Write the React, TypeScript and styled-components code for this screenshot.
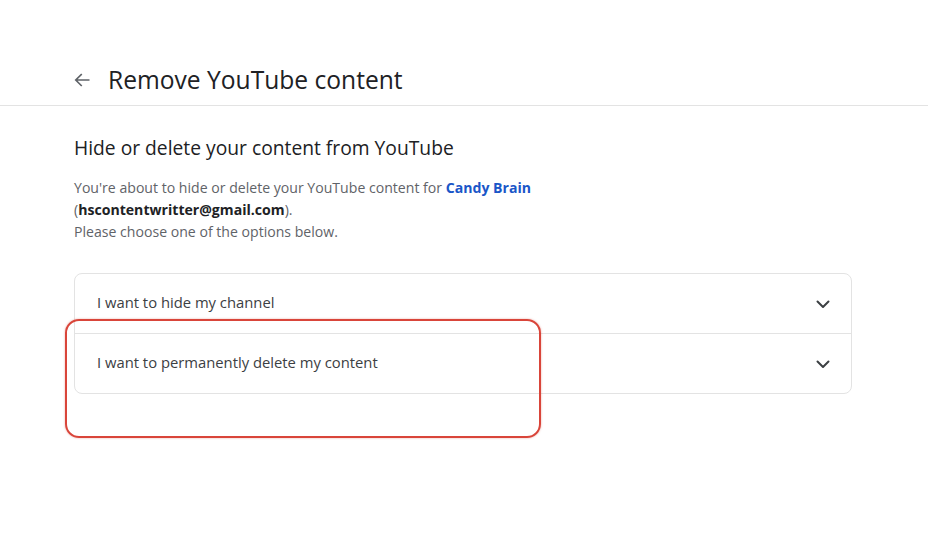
import React from "react"
import styled, { createGlobalStyle } from "styled-components"

const GlobalStyle = createGlobalStyle`
    html, body {
        margin: 0;
        padding: 0;
        background: #ffffff;
    }
    body {
        font-family: "Open Sans", Roboto, Arial, sans-serif;
        color: #202124;
    }
`

const options = [
    { id: "hide", label: "I want to hide my channel" },
    { id: "delete", label: "I want to permanently delete my content" },
]

const Chevron = () => (
    <svg width="24" height="24" viewBox="0 0 24 24" fill="none">
        <path d="M6.5 9.5L12 15l5.5-5.5" stroke="#3c4043" strokeWidth="2" strokeLinecap="round" strokeLinejoin="round" />
    </svg>
)

const BackArrow = () => (
    <svg width="20" height="20" viewBox="0 0 24 24" fill="none">
        <path d="M20 12H5M11 5.5L4.5 12l6.5 6.5" stroke="#5f6368" strokeWidth="2" strokeLinecap="square" />
    </svg>
)

export default function App() {
    return (
        <Page>
            <GlobalStyle />
            <Header>
                <BackButton aria-label="Back">
                    <BackArrow />
                </BackButton>
                <Title>Remove YouTube content</Title>
            </Header>
            <Main>
                <Heading>Hide or delete your content from YouTube</Heading>
                <Intro>
                    You're about to hide or delete your YouTube content for <ChannelName>Candy Brain</ChannelName>
                    <br />
                    (<Email>hscontentwritter@gmail.com</Email>).
                    <br />
                    Please choose one of the options below.
                </Intro>
                <Options>
                    {options.map((item) => (
                        <OptionRow key={item.id}>
                            <OptionLabel>{item.label}</OptionLabel>
                            <Chevron />
                        </OptionRow>
                    ))}
                    <Highlight />
                </Options>
            </Main>
        </Page>
    )
}

const Page = styled.div`
    width: 928px;
    min-height: 557px;
    background: #ffffff;
`

const Header = styled.header`
    display: flex;
    align-items: center;
    gap: 16px;
    height: 106px;
    padding: 54px 0 0 72px;
    box-sizing: border-box;
    border-bottom: 1px solid #e3e3e3;
`

const BackButton = styled.button`
    display: flex;
    align-items: center;
    justify-content: center;
    width: 20px;
    height: 20px;
    padding: 0;
    border: none;
    background: none;
`

const Title = styled.h1`
    margin: 0;
    font-size: 24.6px;
    font-weight: 400;
    line-height: 32px;
    color: #202124;
`

const Main = styled.main`
    padding: 28px 0 0 74px;
    width: 778px;
`

const Heading = styled.h2`
    margin: 0;
    font-size: 19.25px;
    font-weight: 400;
    line-height: 28px;
    color: #202124;
`

const Intro = styled.p`
    margin: 15px 0 0;
    font-size: 14.1px;
    line-height: 22px;
    color: #5f6368;
`

const ChannelName = styled.span`
    color: #1a56c8;
    font-weight: 700;
`

const Email = styled.span`
    color: #202124;
    font-weight: 700;
`

const Options = styled.div`
    position: relative;
    margin-top: 30px;
    border: 1px solid #e3e3e3;
    border-radius: 8px;
`

const OptionRow = styled.div`
    display: flex;
    align-items: center;
    justify-content: space-between;
    height: 59px;
    padding: 0 16px 0 22px;

    & + & {
        border-top: 1px solid #e3e3e3;
    }
`

const OptionLabel = styled.span`
    margin-bottom: 3px;
    font-size: 14.8px;
    color: #3c4043;
`

const Highlight = styled.div`
    position: absolute;
    left: -10px;
    top: 45px;
    width: 472px;
    height: 115px;
    border: 2.5px solid #d9453a;
    border-radius: 14px;
    box-shadow: 0 0 2px rgba(217, 69, 58, 0.5);
    pointer-events: none;
`
